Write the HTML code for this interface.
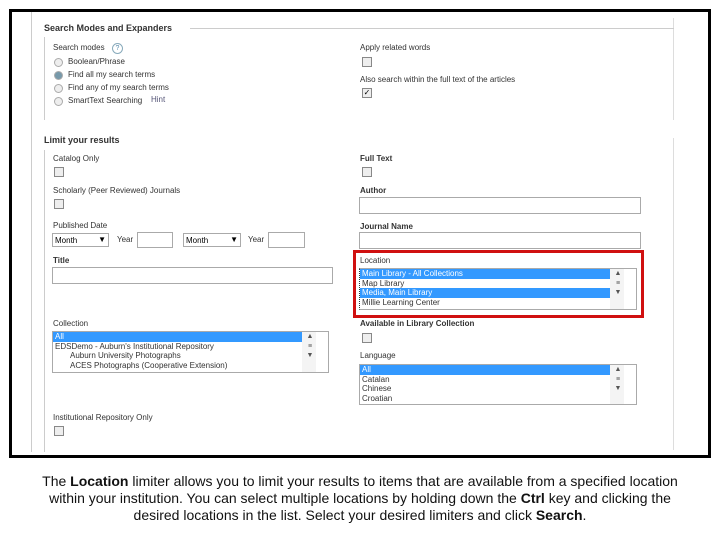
<!DOCTYPE html>
<html><head><style>
body{margin:0;width:720px;height:540px;background:#fff;position:relative;font-family:"Liberation Sans",sans-serif;overflow:hidden}
.a{position:absolute}
.l{position:absolute;font-size:8px;color:#333;white-space:nowrap}
.b{font-weight:bold}
.cb{position:absolute;width:8px;height:8px;border:1px solid #888;background:#eee}
.in{position:absolute;border:1px solid #aaa;background:#fff;box-sizing:border-box}
.rd{position:absolute;width:7px;height:7px;border:1px solid #aaa;border-radius:50%;background:#eee}
.lb{position:absolute;border:1px solid #aaa;box-sizing:border-box;background:#fff;font-size:8px;line-height:9.5px;color:#333}
.lb div{white-space:nowrap;padding-left:2px;margin-right:12px}
.s{background:#3399ff;color:#fff}
.sb{position:absolute;right:0;top:0;bottom:0;width:12px;background:#f4f4f4;font-size:7px;color:#555;text-align:center}
.cap{position:absolute;left:0;width:720px;text-align:center;font-size:14px;color:#111;line-height:17px}
</style></head><body>
<div class="a" style="left:9px;top:9px;width:696px;height:443px;border:3px solid #000"></div>
<div class="a" style="left:31px;top:12px;width:1px;height:440px;background:#ccc"></div>
<div class="a" style="left:673px;top:18px;width:1px;height:102px;background:#ddd"></div>
<div class="a" style="left:673px;top:138px;width:1px;height:312px;background:#ddd"></div>
<div class="l b" style="left:44px;top:23px;font-size:9px">Search Modes and Expanders</div>
<div class="a" style="left:190px;top:28px;width:484px;height:1px;background:#ccc"></div>
<div class="a" style="left:44px;top:37px;width:1px;height:83px;background:#ccc"></div>
<div class="l" style="left:53px;top:43px">Search modes</div>
<div class="a" style="left:112px;top:43px;width:9px;height:9px;border:1px solid #8ab;border-radius:50%;font-size:7px;color:#58a;text-align:center;line-height:9px">?</div>
<div class="rd" style="left:54px;top:58px"></div><div class="l" style="left:68px;top:57px">Boolean/Phrase</div>
<div class="rd" style="left:54px;top:71px;background:#79a"></div><div class="l" style="left:68px;top:70px">Find all my search terms</div>
<div class="rd" style="left:54px;top:84px"></div><div class="l" style="left:68px;top:83px">Find any of my search terms</div>
<div class="rd" style="left:54px;top:97px"></div><div class="l" style="left:68px;top:96px">SmartText Searching</div><div class="l" style="left:151px;top:95px;color:#557">Hint</div>
<div class="l" style="left:360px;top:43px">Apply related words</div><div class="cb" style="left:362px;top:57px"></div>
<div class="l" style="left:360px;top:75px">Also search within the full text of the articles</div><div class="cb" style="left:362px;top:88px;font-size:8px;line-height:8px;text-align:center">✓</div>
<div class="l b" style="left:44px;top:135px;font-size:9px">Limit your results</div>
<div class="a" style="left:44px;top:150px;width:1px;height:302px;background:#ccc"></div>
<div class="l" style="left:53px;top:154px">Catalog Only</div><div class="cb" style="left:54px;top:167px"></div>
<div class="l" style="left:53px;top:186px">Scholarly (Peer Reviewed) Journals</div><div class="cb" style="left:54px;top:199px"></div>
<div class="l" style="left:53px;top:221px">Published Date</div>
<div class="in" style="left:52px;top:233px;width:57px;height:14px;font-size:8px;padding:2px">Month<span style="position:absolute;right:2px;top:1px">▼</span></div>
<div class="l" style="left:117px;top:235px">Year</div><div class="in" style="left:137px;top:232px;width:36px;height:16px"></div>
<div class="in" style="left:183px;top:233px;width:58px;height:14px;font-size:8px;padding:2px">Month<span style="position:absolute;right:2px;top:1px">▼</span></div>
<div class="l" style="left:248px;top:235px">Year</div><div class="in" style="left:268px;top:232px;width:37px;height:16px"></div>
<div class="l b" style="left:53px;top:256px">Title</div><div class="in" style="left:52px;top:267px;width:281px;height:17px"></div>
<div class="l" style="left:53px;top:319px">Collection</div>
<div class="lb" style="left:52px;top:331px;width:277px;height:42px"><div class="s">All</div><div>EDSDemo - Auburn's Institutional Repository</div><div style="padding-left:17px">Auburn University Photographs</div><div style="padding-left:17px">ACES Photographs (Cooperative Extension)</div><div class="sb">▲<br>≡<br>▼</div></div>
<div class="l" style="left:53px;top:413px">Institutional Repository Only</div><div class="cb" style="left:54px;top:426px"></div>
<div class="l b" style="left:360px;top:154px">Full Text</div><div class="cb" style="left:362px;top:167px"></div>
<div class="l b" style="left:360px;top:186px">Author</div><div class="in" style="left:359px;top:197px;width:282px;height:17px"></div>
<div class="l b" style="left:360px;top:222px">Journal Name</div><div class="in" style="left:359px;top:232px;width:282px;height:17px"></div>
<div class="a" style="left:353px;top:250px;width:285px;height:62px;border:3px solid #d01010"></div>
<div class="l" style="left:360px;top:256px">Location</div>
<div class="lb" style="left:359px;top:268px;width:278px;height:42px;border-left:1px dotted #333"><div class="s">Main Library - All Collections</div><div>Map Library</div><div class="s">Media, Main Library</div><div>Millie Learning Center</div><div class="sb">▲<br>≡<br>▼</div></div>
<div class="l b" style="left:360px;top:319px">Available in Library Collection</div><div class="cb" style="left:362px;top:333px"></div>
<div class="l" style="left:360px;top:351px">Language</div>
<div class="lb" style="left:359px;top:364px;width:278px;height:41px"><div class="s">All</div><div>Catalan</div><div>Chinese</div><div>Croatian</div><div class="sb">▲<br>≡<br>▼</div></div>
<div class="cap" style="top:473px">The <b>Location</b> limiter allows you to limit your results to items that are available from a specified location<br>within your institution. You can select multiple locations by holding down the <b>Ctrl</b> key and clicking the<br>desired locations in the list. Select your desired limiters and click <b>Search</b>.</div>
</body></html>
